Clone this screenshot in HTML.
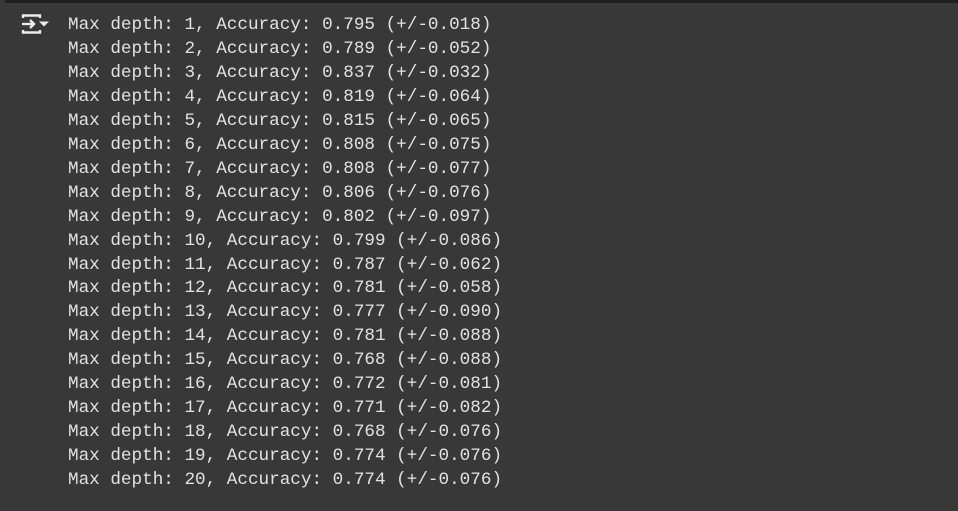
<!DOCTYPE html>
<html><head><style>
html,body{margin:0;padding:0;width:958px;height:511px;background:#383838;overflow:hidden}
.top{position:absolute;left:5px;top:0;width:953px;height:3px;background:#1f1f1f}
pre{position:absolute;left:68px;top:14px;margin:0;font-family:"Liberation Mono",monospace;font-size:17.65px;line-height:23.95px;color:#e2e2e2}
svg{position:absolute;left:20px;top:12px}
</style></head><body>
<div class="top"></div>
<svg width="30" height="26" viewBox="0 0 30 26" fill="none" stroke="#ececec" stroke-width="2.4">
<path d="M3 6V3.5H20V6"/><path d="M3 18V20.5H20V18"/><path d="M2 12H14"/><path d="M10 8L14 12L10 16"/>
<path d="M19 9.5H29L24 14.5Z" fill="#ececec" stroke="none"/>
</svg>
<pre>Max depth: 1, Accuracy: 0.795 (+/-0.018)
Max depth: 2, Accuracy: 0.789 (+/-0.052)
Max depth: 3, Accuracy: 0.837 (+/-0.032)
Max depth: 4, Accuracy: 0.819 (+/-0.064)
Max depth: 5, Accuracy: 0.815 (+/-0.065)
Max depth: 6, Accuracy: 0.808 (+/-0.075)
Max depth: 7, Accuracy: 0.808 (+/-0.077)
Max depth: 8, Accuracy: 0.806 (+/-0.076)
Max depth: 9, Accuracy: 0.802 (+/-0.097)
Max depth: 10, Accuracy: 0.799 (+/-0.086)
Max depth: 11, Accuracy: 0.787 (+/-0.062)
Max depth: 12, Accuracy: 0.781 (+/-0.058)
Max depth: 13, Accuracy: 0.777 (+/-0.090)
Max depth: 14, Accuracy: 0.781 (+/-0.088)
Max depth: 15, Accuracy: 0.768 (+/-0.088)
Max depth: 16, Accuracy: 0.772 (+/-0.081)
Max depth: 17, Accuracy: 0.771 (+/-0.082)
Max depth: 18, Accuracy: 0.768 (+/-0.076)
Max depth: 19, Accuracy: 0.774 (+/-0.076)
Max depth: 20, Accuracy: 0.774 (+/-0.076)</pre>
</body></html>
